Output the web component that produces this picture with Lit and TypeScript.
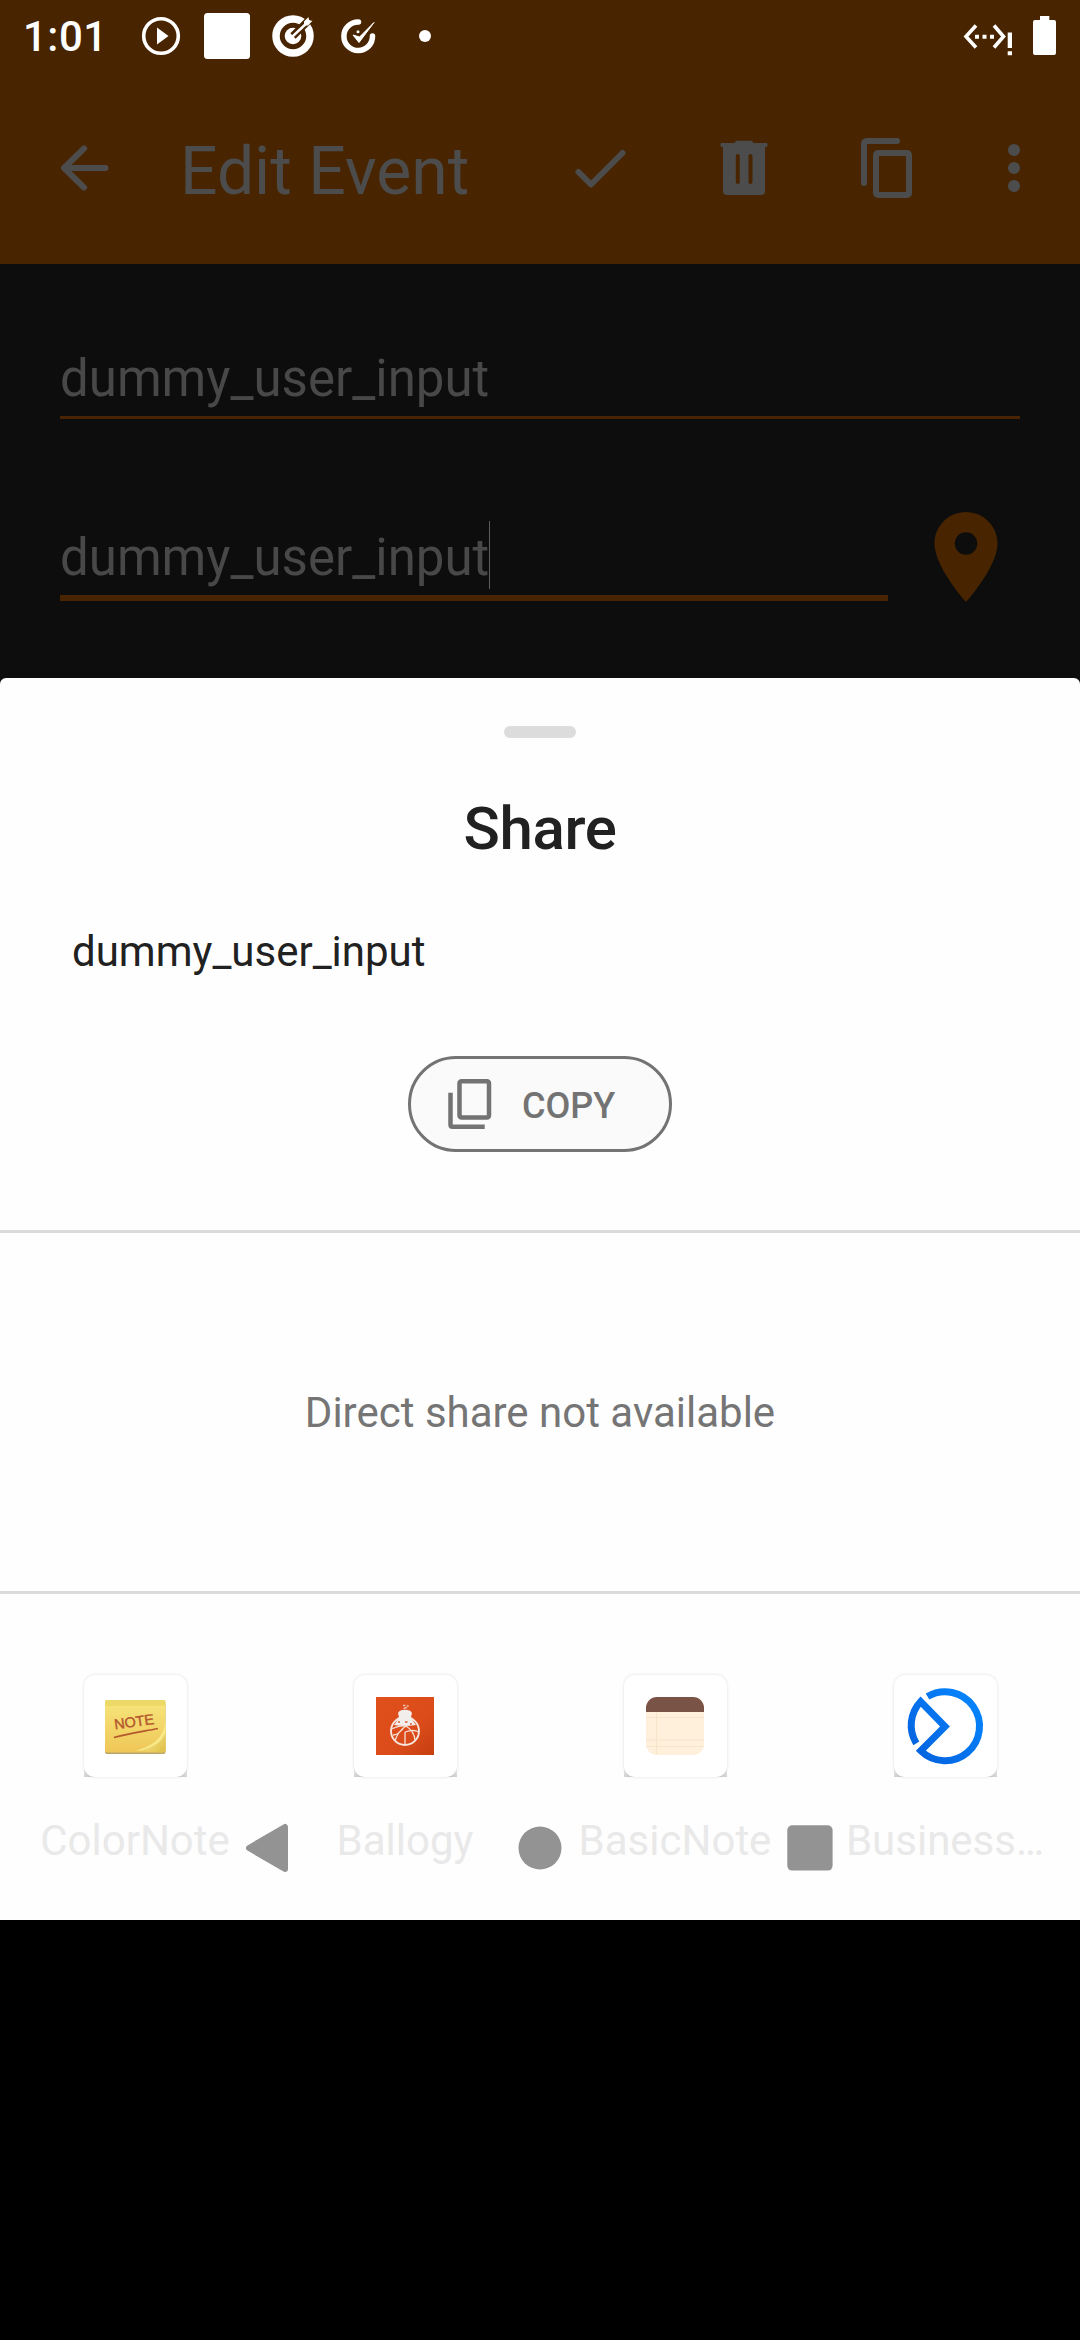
import { LitElement, html, css, svg } from "lit";
import { customElement, property } from "lit/decorators.js";

const noteIcon = svg`
  <defs>
    <linearGradient id="paper" x1="0" y1="0" x2="0" y2="1">
      <stop offset="0" stop-color="#f7e67c"/><stop offset="1" stop-color="#efc657"/>
    </linearGradient>
    <linearGradient id="curl" x1="0" y1="0" x2="1" y2="1">
      <stop offset="0.3" stop-color="#f9ec92"/><stop offset="1" stop-color="#dfbd45"/>
    </linearGradient>
  </defs>
  <rect x="30" y="36" width="60.5" height="52" rx="2" fill="#b9a569"/>
  <rect x="30" y="34" width="60.5" height="52.5" rx="2" fill="url(#paper)"/>
  <path d="M30 36q0-2 2-2h56.500q2 0 2 2v4h-60.500z" fill="#ecd968"/>
  <path d="M90.500 55C89 69 82 79 61 84.500L87 86.500q3.500-.5 3.500-3z" fill="url(#curl)"/>
  <path d="M90.500 55C89 69 82 79 61 84.500C79 83 88 75 90.500 66z" fill="#f8e988"/>
  <text class="scribble" x="40" y="63.500" transform="rotate(-8 40 63.500)" textLength="40">NOTE</text>
  <path d="M39 71.500C53 67.500 68 65.500 83 62.500" fill="none" stroke="#b4582d" stroke-width="1.700"/>`;

const ballIcon = svg`
  <defs>
    <linearGradient id="ember" x1="0" y1="0" x2="1" y2="1">
      <stop offset="0" stop-color="#e0501c"/><stop offset="0.600" stop-color="#dc4c1a"/><stop offset="1" stop-color="#c53f10"/>
    </linearGradient>
  </defs>
  <rect x="31" y="31" width="58" height="58" fill="url(#ember)"/>
  <circle cx="60" cy="65" r="14" fill="none" stroke="#f6e6df" stroke-width="1.900"/>
  <path d="M54.500 45q5.500-2.500 11 0l1.500 2-1 4 2 4 3 4q-11 2-22 0l3-4 2-4-1-4z" fill="#f2eeec"/>
  <path d="M58 39.500h2.500M62 39.500l1.500 1M58.500 42.500l3.500-1" stroke="#f0b9a4" stroke-width="1.600"/>
  <path d="M60 66v13M46.500 63q9-4 14-3M50 75Q53 65 61 60M60 66q9-3 13.500 0M61 60q8 5 9 14M48 69q6 0 12-9" fill="none" stroke="#f6e0d6" stroke-width="1.300"/>
  <path d="M53 56h2M60 56h2.500M65 58h2" stroke="#d95f38" stroke-width="1.300"/>`;

const basicIcon = svg`
  <rect x="31" y="31" width="58" height="58" rx="11" fill="#fef0da"/>
  <path d="M31 46v-4a11 11 0 0 1 11-11h36a11 11 0 0 1 11 11v4z" fill="#7a5347"/>
  <path d="M31 51.500h58M31 74h58M31 80.500h58M41.500 46v42" stroke="#f7e4cc" stroke-width="1.200"/>`;

const suiteIcon = svg`
  <defs>
    <linearGradient id="azure" gradientUnits="userSpaceOnUse" x1="30" y1="85" x2="85" y2="35">
      <stop offset="0" stop-color="#0564e0"/><stop offset="1" stop-color="#0582fa"/>
    </linearGradient>
  </defs>
  <path d="M42.500 30.500A34.500 34.500 0 1 1 35.800 84.800L60 60.500L35.600 35.600A34.500 34.500 0 0 0 31.300 77.300" fill="none" stroke="url(#azure)" stroke-width="7"/>`;

@customElement("status-bar")
class StatusBar extends LitElement {
  static styles = css`
    :host { display: flex; height: 72px; align-items: center; justify-content: space-between; color: #fff; }
    .clock { box-sizing: border-box; width: 141px; height: 72px; padding: 1px 0 0 23px; font: 500 42px/72px Roboto, sans-serif; letter-spacing: 0.5px; }
    .left { display: flex; align-items: center; }
    svg { display: block; fill: #fff; }
  `;
  render() {
    return html`
      <div class="left">
        <div class="clock">1:01</div>
        <svg width="300" height="72" viewBox="141 0 300 72">
          <circle cx="161" cy="36" r="17.300" fill="none" stroke="#fff" stroke-width="3.600"/>
          <path d="M157 27.500v17l11.500-8.500z"/>
          <rect x="204" y="13" width="46" height="46" rx="3.500"/>
          <circle cx="293" cy="36" r="17" fill="none" stroke="#fff" stroke-width="7.500"/>
          <circle cx="293" cy="36" r="8.300"/>
          <path d="M293 36L311 18" stroke="#482500" stroke-width="7.500"/>
          <path d="M293 36L309 21" stroke="#fff" stroke-width="2.400" stroke-linecap="round"/>
          <path d="M304 21.500l4.500-4.500.5 3.500 3.500.3-4.500 4.700h-4z"/>
          <path d="M358.500 22A14.300 14.300 0 1 0 372.500 36" fill="none" stroke="#fff" stroke-width="5.500" stroke-linecap="round"/>
          <path d="M353 35l6 7.500L374 22.500L359.500 37z" stroke="#fff" stroke-width="1"/>
          <circle cx="358" cy="31.700" r="1.500"/>
          <circle cx="425" cy="36" r="6"/>
        </svg>
      </div>
      <svg width="120" height="72" viewBox="960 0 120 72">
        <path d="M976 25.500L966 36.500L976 47.500M994 25.500L1003.500 36.500L994 47.500" fill="none" stroke="#fff" stroke-width="3.600"/>
        <path d="M975 34.700h4v4h-4zM982.500 34.700h4v4h-4zM990 34.700h4v4h-4zM1007.700 32.500h4.300v15.500h-4.300zM1007.700 51.200h4.300v4h-4.300z"/>
        <path d="M1040 16h9.300v4h4.700a2 2 0 0 1 2 2v31a2 2 0 0 1-2 2h-19a2 2 0 0 1-2-2v-31a2 2 0 0 1 2-2h5z"/>
      </svg>`;
  }
}

@customElement("event-bar")
class EventBar extends LitElement {
  static styles = css`
    :host { display: flex; height: 192px; align-items: center; color: #4c4c4c; }
    .title { font: 400 66px/78px Roboto, sans-serif; margin: 8px auto 0 72px; }
    .back { margin-left: 48px; }
    svg { display: block; fill: none; stroke: currentColor; stroke-width: 6; stroke-linecap: round; stroke-linejoin: round; }
    .solid { fill: currentColor; stroke: none; }
  `;
  render() {
    return html`
      <svg class="back" width="60" height="72" viewBox="48 132 60 72" overflow="visible">
        <path d="M105.500 168H65M84 148.500L64 168L84 187.500"/>
      </svg>
      <div class="title">Edit Event</div>
      <svg width="516" height="72" viewBox="564 132 516 72">
        <path d="M578.500 172L591 184.500L622.500 153"/>
        <path class="solid" fill-rule="evenodd" d="M734.500 143q1-2.200 3-2.200h13q2 0 3 2.200h13q1 0 1 2t-1 2h-1.500v44q0 4-4 4h-34q-4 0-4-4v-44h-1.500q-1 0-1-2t1-2zM737.800 154q-2 0-2 2v26q0 2 2 2t2-2v-26q0-2-2-2zM750.500 154q-2 0-2 2v26q0 2 2 2t2-2v-26q0-2-2-2z"/>
        <path d="M864 183v-39q0-3 3-3h30"/>
        <rect x="876" y="153" width="33" height="42" rx="2"/>
        <g class="solid"><circle cx="1014" cy="150" r="6"/><circle cx="1014" cy="168" r="6"/><circle cx="1014" cy="186" r="6"/></g>
      </svg>`;
  }
}

@customElement("event-form")
class EventForm extends LitElement {
  static styles = css`
    :host { display: block; height: 414px; padding: 75px 60px 0; box-sizing: border-box; background: #0d0d0d; color: #484848; font: 400 51px/70px Roboto, sans-serif; }
    .field { box-sizing: border-box; height: 80px; padding-top: 5px; border-bottom: 3px solid #482500; }
    .first { margin-bottom: 93px; }
    .row { display: flex; }
    .focused { display: flex; width: 828px; height: 89px; border-bottom: 6px solid #482500; padding-top: 9px; }
    .focused span { padding-top: 2px; }
    .caret { width: 1px; height: 68px; background: #5c5c5c; }
    .pin { margin: -9px 0 0 24px; fill: #482500; }
  `;
  render() {
    return html`
      <div class="field first">dummy_user_input</div>
      <div class="row">
        <div class="field focused"><span>dummy_user_input</span><i class="caret"></i></div>
        <svg class="pin" width="108" height="108" viewBox="0 0 24 24">
          <path d="M12 2C8.130 2 5 5.130 5 9c0 5.250 7 13 7 13s7-7.750 7-13c0-3.870-3.130-7-7-7zm0 9.500a2.500 2.500 0 1 1 0-5 2.500 2.500 0 0 1 0 5z"/>
        </svg>
      </div>`;
  }
}

@customElement("app-target")
class AppTarget extends LitElement {
  @property() label = "";
  @property({ attribute: false }) icon: unknown;
  static styles = css`
    :host { display: flex; flex-direction: column; align-items: center; width: 270px; }
    .shade { background: linear-gradient(transparent 90%, #cfcfcf); }
    .tile { display: flex; align-items: center; justify-content: center; width: 103px; height: 102px; border-radius: 11px; background: #fff; box-shadow: 0 0 3px rgba(0, 0, 0, 0.14); }
    .tile svg { flex: none; display: block; }
    .scribble { font: 400 14.500px "Liberation Sans", sans-serif; fill: #b4582d; stroke: #b4582d; stroke-width: 0.400; }
    .label { margin-top: 39px; font: 400 42px/50px Roboto, sans-serif; color: #e9e9e9; white-space: nowrap; }
  `;
  render() {
    return html`
      <div class="shade"><div class="tile"><svg width="120" height="120" viewBox="0 0 120 120">${this.icon}</svg></div></div>
      <div class="label">${this.label}</div>`;
  }
}

@customElement("share-sheet")
class ShareSheet extends LitElement {
  static styles = css`
    :host { display: flex; flex-direction: column; position: relative; height: 1242px; background: #fefefe; border-radius: 6px 6px 0 0; font-family: Roboto, sans-serif; }
    .handle { width: 72px; height: 12px; border-radius: 6px; background: #dcdcdc; margin: 48px auto 0; }
    .title { font-weight: 500; font-size: 60px; line-height: 70px; letter-spacing: -0.4px; color: #212121; text-align: center; margin-top: 56px; }
    .preview { font-size: 42px; line-height: 50px; color: #212121; padding-left: 72px; margin-top: 63px; }
    .copy { display: flex; align-items: center; box-sizing: border-box; width: 264px; height: 96px; margin: 79px auto 78px; border: 3px solid #737373; border-radius: 48px; background: #fafafa; color: #737373; font-size: 36px; font-weight: 500; padding-left: 27px; }
    .copy svg { fill: none; stroke: currentColor; stroke-width: 4.500; margin-right: 20px; }
    .copy span { padding-top: 3px; }
    .direct { display: flex; align-items: center; justify-content: center; box-sizing: border-box; height: 364px; border: solid #dadada; border-width: 3px 0; color: #757575; font-size: 42px; }
    .targets { display: flex; padding-top: 81px; }
    .nav { position: absolute; left: 0; bottom: 0; width: 1080px; height: 144px; fill: #939393; }
  `;
  render() {
    const targets = [
      { label: "ColorNote", icon: noteIcon },
      { label: "Ballogy", icon: ballIcon },
      { label: "BasicNote", icon: basicIcon },
      { label: "Business…", icon: suiteIcon },
    ];
    return html`
      <div class="handle"></div>
      <div class="title">Share</div>
      <div class="preview">dummy_user_input</div>
      <div class="copy">
        <svg width="64" height="64" viewBox="438 1072 64 64">
          <rect x="459.500" y="1081.300" width="29.500" height="36.200" rx="2"/>
          <path d="M450.500 1092.700v32q0 2 2 2h32.200"/>
        </svg>
        <span>COPY</span>
      </div>
      <div class="direct">Direct share not available</div>
      <div class="targets">
        ${targets.map((t) => html`<app-target .label=${t.label} .icon=${t.icon}></app-target>`)}
      </div>
      <svg class="nav" viewBox="0 1776 1080 144">
        <path d="M249 1848L285 1827V1869z" stroke="#939393" stroke-width="6" stroke-linejoin="round"/>
        <circle cx="540" cy="1848" r="21.500"/>
        <rect x="787.300" y="1825.300" width="45.300" height="45.300" rx="5"/>
      </svg>`;
  }
}

@customElement("app-root")
class AppRoot extends LitElement {
  static styles = css`
    :host { display: block; width: 1080px; height: 2340px; overflow: hidden; background: #000; }
    .top { background: #482500; }
    .under { background: #0d0d0d; }
  `;
  render() {
    return html`
      <div class="top"><status-bar></status-bar><event-bar></event-bar></div>
      <event-form></event-form>
      <div class="under"><share-sheet></share-sheet></div>`;
  }
}
